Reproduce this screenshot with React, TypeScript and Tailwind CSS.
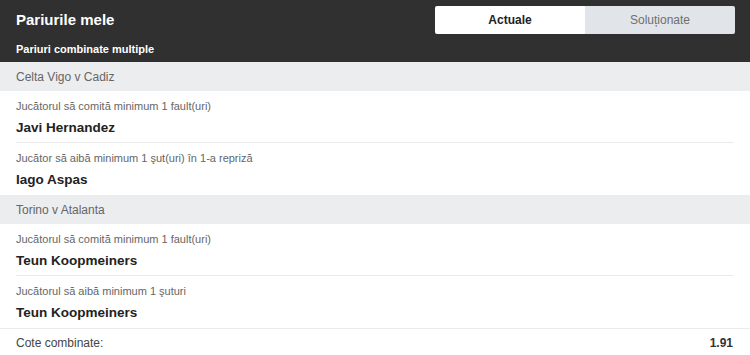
const font = { fontFamily: '"Liberation Sans", Arial, sans-serif' };

interface Bet {
  market: string;
  player: string;
}

interface Match {
  name: string;
  bets: Bet[];
}

const matches: Match[] = [
  {
    name: 'Celta Vigo v Cadiz',
    bets: [
      { market: 'Jucătorul să comită minimum 1 fault(uri)', player: 'Javi Hernandez' },
      { market: 'Jucător să aibă minimum 1 şut(uri) în 1-a repriză', player: 'Iago Aspas' },
    ],
  },
  {
    name: 'Torino v Atalanta',
    bets: [
      { market: 'Jucătorul să comită minimum 1 fault(uri)', player: 'Teun Koopmeiners' },
      { market: 'Jucătorul să aibă minimum 1 şuturi', player: 'Teun Koopmeiners' },
    ],
  },
];

export default function App() {
  return (
    <div className="w-[750px] h-[355px] bg-white overflow-hidden" style={font}>
      {/* Header */}
      <div className="bg-[#303030] h-[62px] pl-4 pr-[15px] flex flex-col">
        <div className="flex items-start justify-between pt-[6px]">
          <h1 className="text-white font-bold text-[15px] leading-[28px]">Pariurile mele</h1>
          <div className="flex w-[300px] h-[28px] rounded-[2px] overflow-hidden">
            <button className="flex-1 bg-white text-[#222] font-bold text-[12px]">Actuale</button>
            <button className="flex-1 bg-[#e1e4e8] text-[#6f6f6f] text-[12px]">Soluționate</button>
          </div>
        </div>
        <div className="text-white font-bold text-[11px] mt-[9px] leading-[13px]">Pariuri combinate multiple</div>
      </div>

      {matches.map((m) => (
        <div key={m.name}>
          <div className="bg-[#ebedef] h-[29px] px-4 flex items-center text-[12px] text-[#666]">{m.name}</div>
          {m.bets.map((b, i) => (
            <div key={i} className="px-4">
              <div className={`h-[52px] flex flex-col pt-[9px] ${i === 0 ? 'border-b border-[#ebebeb]' : ''}`}>
                <div className="text-[11px] text-[#666] leading-[13px]">{b.market}</div>
                <div className="text-[13.5px] font-bold text-[#222] leading-[16px] mt-[6.5px]">{b.player}</div>
              </div>
            </div>
          ))}
        </div>
      ))}

      {/* Footer */}
      <div className="border-t border-[#ebebeb] h-[28px] px-4 flex items-center justify-between text-[12px]">
        <span className="text-[#444]">Cote combinate:</span>
        <span className="font-bold text-[#333] pr-[1px]">1.91</span>
      </div>
    </div>
  );
}
